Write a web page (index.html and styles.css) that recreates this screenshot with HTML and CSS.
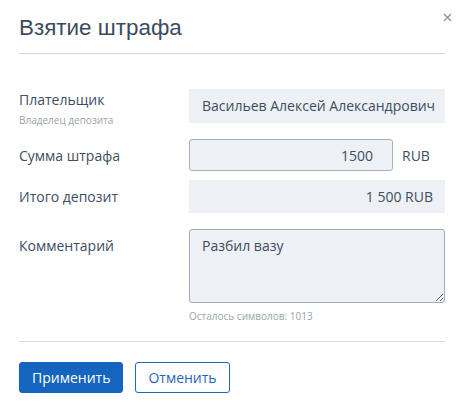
FILE: index.html
```html
<!DOCTYPE html>
<html lang="ru">
<head>
  <meta charset="UTF-8" />
  <meta name="viewport" content="width=device-width, initial-scale=1.0"/>
  <title>Взятие штрафа</title>
  <link rel="stylesheet" href="styles.css">
</head>
<body>
  <div class="modal">
    <div class="modal-head">
      <h2>Взятие штрафа</h2>
      <button class="close" title="Закрыть">
        <svg width="9" height="9" viewBox="0 0 9 9">
          <path d="M1 1L8 8M8 1L1 8" stroke="#7f93b0" stroke-width="1.3" fill="none"/>
        </svg>
      </button>
    </div>

    <div class="form">
      <div class="row row-payer">
        <div class="label">
          <div>Плательщик</div>
          <div class="hint">Владелец депозита</div>
        </div>
        <div class="field">Васильев Алексей Александрович</div>
      </div>

      <div class="row row-center row-sum">
        <div class="label">Сумма штрафа</div>
        <div class="with-unit">
          <input class="input" type="text" value="1500">
          <span class="unit">RUB</span>
        </div>
      </div>

      <div class="row row-center row-total">
        <div class="label">Итого депозит</div>
        <div class="field right">1 500 RUB</div>
      </div>

      <div class="row row-comment">
        <div class="label">Комментарий</div>
        <div>
          <textarea class="textarea">Разбил вазу</textarea>
          <div class="hint counter">Осталось символов: 1013</div>
        </div>
      </div>
    </div>

    <div class="modal-foot">
      <button class="btn btn-primary">Применить</button>
      <button class="btn btn-outline">Отменить</button>
    </div>
  </div>
</body>
</html>
```

FILE: styles.css
```css
body {
  margin: 0;
  background-color: #fff;
  color: #3d4e63;
  font-family: "Open Sans", sans-serif;
  font-size: 14px;
}
.modal {
  position: relative;
  padding: 0 19px;
}
.modal-head {
  padding: 15px 0 12px;
  border-bottom: 1px solid #cdd6e0;
}
.modal-head h2 {
  margin: 0;
  font-family: "Liberation Sans", Arial, sans-serif;
  font-weight: normal;
  font-size: 22.4px;
  line-height: 26px;
  color: #3b4b60;
}
.close {
  position: absolute;
  top: 13px;
  right: 12px;
  padding: 0;
  border: 0;
  background: none;
  line-height: 0;
  cursor: pointer;
}
.form {
  padding: 35px 0 18px;
  border-bottom: 1px solid #d5dce4;
}
.row {
  display: grid;
  grid-template-columns: 170px 256px;
  align-items: start;
  line-height: 19px;
}
.row-center {
  align-items: center;
}
.row-sum {
  margin-top: 12px;
}
.row-total {
  margin-top: 9px;
}
.row-comment {
  margin-top: 16px;
}
.row-payer .label {
  padding-top: 1px;
}
.row-comment .label {
  padding-top: 7px;
}
.hint {
  margin-top: 4px;
  font-size: 10px;
  line-height: 14px;
  color: #9aa3ad;
}
.field {
  height: 34px;
  line-height: 34px;
  padding: 0 13px;
  background-color: #edf0f4;
  white-space: nowrap;
}
.row-total .field {
  height: 33px;
  line-height: 33px;
}
.right {
  text-align: right;
  padding-right: 12px;
}
.with-unit {
  display: flex;
  align-items: center;
}
.input {
  box-sizing: border-box;
  width: 204px;
  height: 32px;
  padding: 0 19px 0 12px;
  border: 1px solid #a6b3c3;
  border-radius: 3px;
  background-color: #edf0f4;
  color: #3d4e63;
  font-family: "Open Sans", sans-serif;
  font-size: 14px;
  text-align: right;
}
.unit {
  margin-left: 9px;
}
.textarea {
  display: block;
  box-sizing: border-box;
  width: 256px;
  height: 74px;
  margin: 0;
  padding: 6px 12px;
  border: 1px solid #9eacbd;
  border-radius: 3px;
  background-color: #edf0f4;
  color: #3d4e63;
  font-family: "Open Sans", sans-serif;
  font-size: 14px;
  line-height: 19px;
}
.counter {
  margin-top: 6px;
}
.modal-foot {
  display: flex;
  gap: 12px;
  padding-top: 20px;
}
.btn {
  height: 31px;
  padding: 0 12px;
  border-radius: 3px;
  font-family: "Open Sans", sans-serif;
  font-size: 14px;
  cursor: pointer;
}
.btn-primary {
  border: 1px solid #1565c0;
  background-color: #1565c0;
  color: #fff;
}
.btn-outline {
  border: 1px solid #1f66be;
  background-color: #fff;
  color: #1f66be;
}
```
